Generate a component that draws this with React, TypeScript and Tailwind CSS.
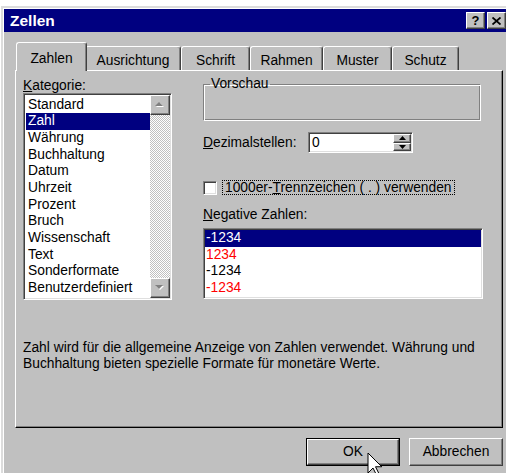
import type { ReactNode } from 'react'

// classic 3D bevels: light top/left, dark bottom/right (and the reverse for wells)
const RAISED =
  'border border-t-white border-l-white border-r-[#404040] border-b-[#404040] shadow-[inset_-1px_-1px_0_#808080]'
const SUNKEN =
  'border border-t-[#808080] border-l-[#808080] border-r-white border-b-white shadow-[inset_1px_1px_0_#404040,inset_-1px_-1px_0_#dfdfdf]'

const CATEGORIES = [
  'Standard',
  'Zahl',
  'Währung',
  'Buchhaltung',
  'Datum',
  'Uhrzeit',
  'Prozent',
  'Bruch',
  'Wissenschaft',
  'Text',
  'Sonderformate',
  'Benutzerdefiniert',
]

const NEGATIVES = [
  { label: '-1234', tone: 'text-black' },
  { label: '1234', tone: 'text-[#ff0000]' },
  { label: '-1234', tone: 'text-black' },
  { label: '-1234', tone: 'text-[#ff0000]' },
]

const TABS = [
  { label: 'Zahlen', width: 'w-[67px]' },
  { label: 'Ausrichtung', width: 'w-[96px]' },
  { label: 'Schrift', width: 'w-[69px]' },
  { label: 'Rahmen', width: 'w-[73px]' },
  { label: 'Muster', width: 'w-[69px]' },
  { label: 'Schutz', width: 'w-[67px]' },
]

function CaptionButton({ children }: { children: ReactNode }) {
  return (
    <div className={`${RAISED} flex h-[17px] w-[19px] items-center justify-center bg-[#c0c0c0]`}>{children}</div>
  )
}

function TitleBar() {
  return (
    <div className="flex h-[23px] items-center justify-between bg-[#000080] pl-[6px] pr-[3px]">
      <span className="pt-[1px] text-[15.5px] font-bold leading-[18px] text-white">Zellen</span>
      <div className="flex gap-[2px]">
        <CaptionButton>
          <span className="text-[13px] font-bold leading-[13px]">?</span>
        </CaptionButton>
        <CaptionButton>
          <svg width={9} height={8} viewBox="0 0 9 8" aria-hidden>
            <path d="M0.5 0.5l8 7M8.5 0.5l-8 7" stroke="black" strokeWidth="1.8" />
          </svg>
        </CaptionButton>
      </div>
    </div>
  )
}

function TabStrip() {
  return (
    <div className="flex h-[28px] items-end pl-[3px]">
      {TABS.map((tab, i) =>
        i === 0 ? (
          <div
            key={tab.label}
            className="relative z-10 -mx-[2px] -mb-[1px] h-[29px] w-[71px] rounded-t-[3px] border-l border-r border-t border-l-white border-r-[#404040] border-t-white bg-[#c0c0c0] pt-[8px] text-center leading-[16px] shadow-[inset_-1px_0_0_#808080]"
          >
            {tab.label}
          </div>
        ) : (
          <div
            key={tab.label}
            className={`${tab.width} h-[24px] rounded-t-[3px] border-l border-r border-t border-l-white border-r-[#404040] border-t-white pt-[6px] text-center leading-[16px] shadow-[inset_-1px_0_0_#808080]`}
          >
            {tab.label}
          </div>
        ),
      )}
    </div>
  )
}

function ScrollGlyph({ down }: { down?: boolean }) {
  const pts = down ? '0,0 8,0 4,4' : '4,0 8,4 0,4'
  return (
    <svg width={10} height={6} viewBox="0 0 10 6" aria-hidden>
      <polygon points={pts} transform="translate(1 1)" fill="#fff" />
      <polygon points={pts} fill="#808080" />
    </svg>
  )
}

function CategoryList() {
  return (
    <div className={`${SUNKEN} flex h-[207px] w-[149px] bg-white p-[1px]`}>
      <div className="flex min-w-0 flex-1 flex-col pl-[1px] pt-[1.6px]">
        {CATEGORIES.map((name) => (
          <div
            key={name}
            className={`h-[16.7px] whitespace-nowrap px-[2px] leading-[16.7px] ${
              name === 'Zahl' ? 'bg-[#000080] text-white' : ''
            }`}
          >
            {name}
          </div>
        ))}
      </div>
      {/* disabled scrollbar: every entry fits, so no thumb */}
      <div className="flex w-[20px] flex-col">
        <div className={`${RAISED} flex h-[20px] items-center justify-center bg-[#c0c0c0]`}>
          <ScrollGlyph />
        </div>
        <div className="flex-1 bg-[repeating-conic-gradient(#c0c0c0_0_25%,#fff_0_50%)] bg-[length:2px_2px]" />
        <div className={`${RAISED} flex h-[20px] items-center justify-center bg-[#c0c0c0]`}>
          <ScrollGlyph down />
        </div>
      </div>
    </div>
  )
}

function SpinBox() {
  return (
    <div className={`${SUNKEN} flex h-[21px] w-[105px] bg-white p-[1px]`}>
      <span className="flex-1 pl-[2px] leading-[17px]">0</span>
      <div className="flex w-[18px] flex-col">
        <div className={`${RAISED} flex flex-1 items-center justify-center bg-[#c0c0c0]`}>
          <svg width={7} height={4} viewBox="0 0 7 4" aria-hidden>
            <polygon points="3.5,0 7,4 0,4" fill="black" />
          </svg>
        </div>
        <div className={`${RAISED} flex flex-1 items-center justify-center bg-[#c0c0c0]`}>
          <svg width={7} height={4} viewBox="0 0 7 4" aria-hidden>
            <polygon points="0,0 7,0 3.5,4" fill="black" />
          </svg>
        </div>
      </div>
    </div>
  )
}

function NegativeList() {
  return (
    <div className={`${SUNKEN} mt-[6px] h-[71px] w-[280px] bg-white p-[1px]`}>
      {NEGATIVES.map((item, i) => (
        <div
          key={i}
          className={`h-[16.7px] px-[1px] leading-[16.7px] ${i === 0 ? 'bg-[#000080] text-white' : item.tone}`}
        >
          {item.label}
        </div>
      ))}
    </div>
  )
}

function Panel() {
  return (
    <div className="flex h-[358px] w-[488px] flex-col border border-b-black border-l-white border-r-black border-t-white pl-[7px] pt-[6px] shadow-[inset_-1px_-1px_0_#808080]">
      <div className="flex gap-[31px]">
        <div className="flex flex-col">
          <span className="mt-[2px] leading-[14px]">
            <u>K</u>ategorie:
          </span>
          <CategoryList />
        </div>

        <div className="flex w-[280px] flex-col">
          <fieldset className="h-[44px] w-[278px] border border-b-white border-l-[#808080] border-r-white border-t-[#808080] px-[6px] shadow-[inset_1px_1px_0_#fff,inset_-1px_-1px_0_#808080]">
            <legend className="px-[1px] leading-[14px]">Vorschau</legend>
          </fieldset>

          <div className="mt-[11px] flex h-[21px] items-center">
            <span className="w-[105px]">
              <u>D</u>ezimalstellen:
            </span>
            <SpinBox />
          </div>

          <div className="mt-[27px] flex h-[15px] items-center gap-[5px]">
            <span className={`${SUNKEN} h-[14px] w-[14px] bg-white`} />
            <span className="border border-dotted border-black px-[2px] leading-[13px]">
              1000er-<u>T</u>rennzeichen ( . ) verwenden
            </span>
          </div>

          <span className="mt-[13px] leading-[14px]">
            <u>N</u>egative Zahlen:
          </span>
          <NegativeList />
        </div>
      </div>

      <p className="mt-[40px] leading-[16px]">
        Zahl wird für die allgemeine Anzeige von Zahlen verwendet. Währung und
        <br />
        Buchhaltung bieten spezielle Formate für monetäre Werte.
      </p>
    </div>
  )
}

function ButtonRow() {
  return (
    <div className="mt-[10px] flex w-[488px] justify-end gap-[9px]">
      <div className="h-[28px] w-[94px] border border-black">
        <div className={`${RAISED} flex h-full items-center justify-center`}>OK</div>
      </div>
      <div className={`${RAISED} flex h-[28px] w-[94px] items-center justify-center`}>Abbrechen</div>
    </div>
  )
}

function Cursor() {
  return (
    <svg
      className="absolute left-[367px] top-[452px]"
      width={17}
      height={26}
      viewBox="-1 -1 17 26"
      aria-hidden
    >
      <polygon
        points="0,0 0,20 5,15 8.75,22.5 11.25,21.25 7.5,13.75 13.75,13.75"
        fill="white"
        stroke="black"
        strokeWidth="1"
        strokeLinejoin="miter"
      />
    </svg>
  )
}

export default function App() {
  return (
    <div className="relative h-[473px] w-[506px] overflow-hidden bg-white pl-[1px] pt-[6px] font-['Liberation_Sans',Arial,sans-serif] text-[13.8px] leading-[16px] text-black">
      <div className="h-[490px] w-[511px] border-2 border-b-[#404040] border-l-[#dcdcdc] border-r-[#404040] border-t-[#dcdcdc] bg-[#c0c0c0]">
        <div className="h-full border border-b-[#808080] border-l-white border-r-[#808080] border-t-white">
          <TitleBar />
          <div className="pl-[11px] pt-[10px]">
            <TabStrip />
            <Panel />
            <ButtonRow />
          </div>
        </div>
      </div>
      <Cursor />
    </div>
  )
}
